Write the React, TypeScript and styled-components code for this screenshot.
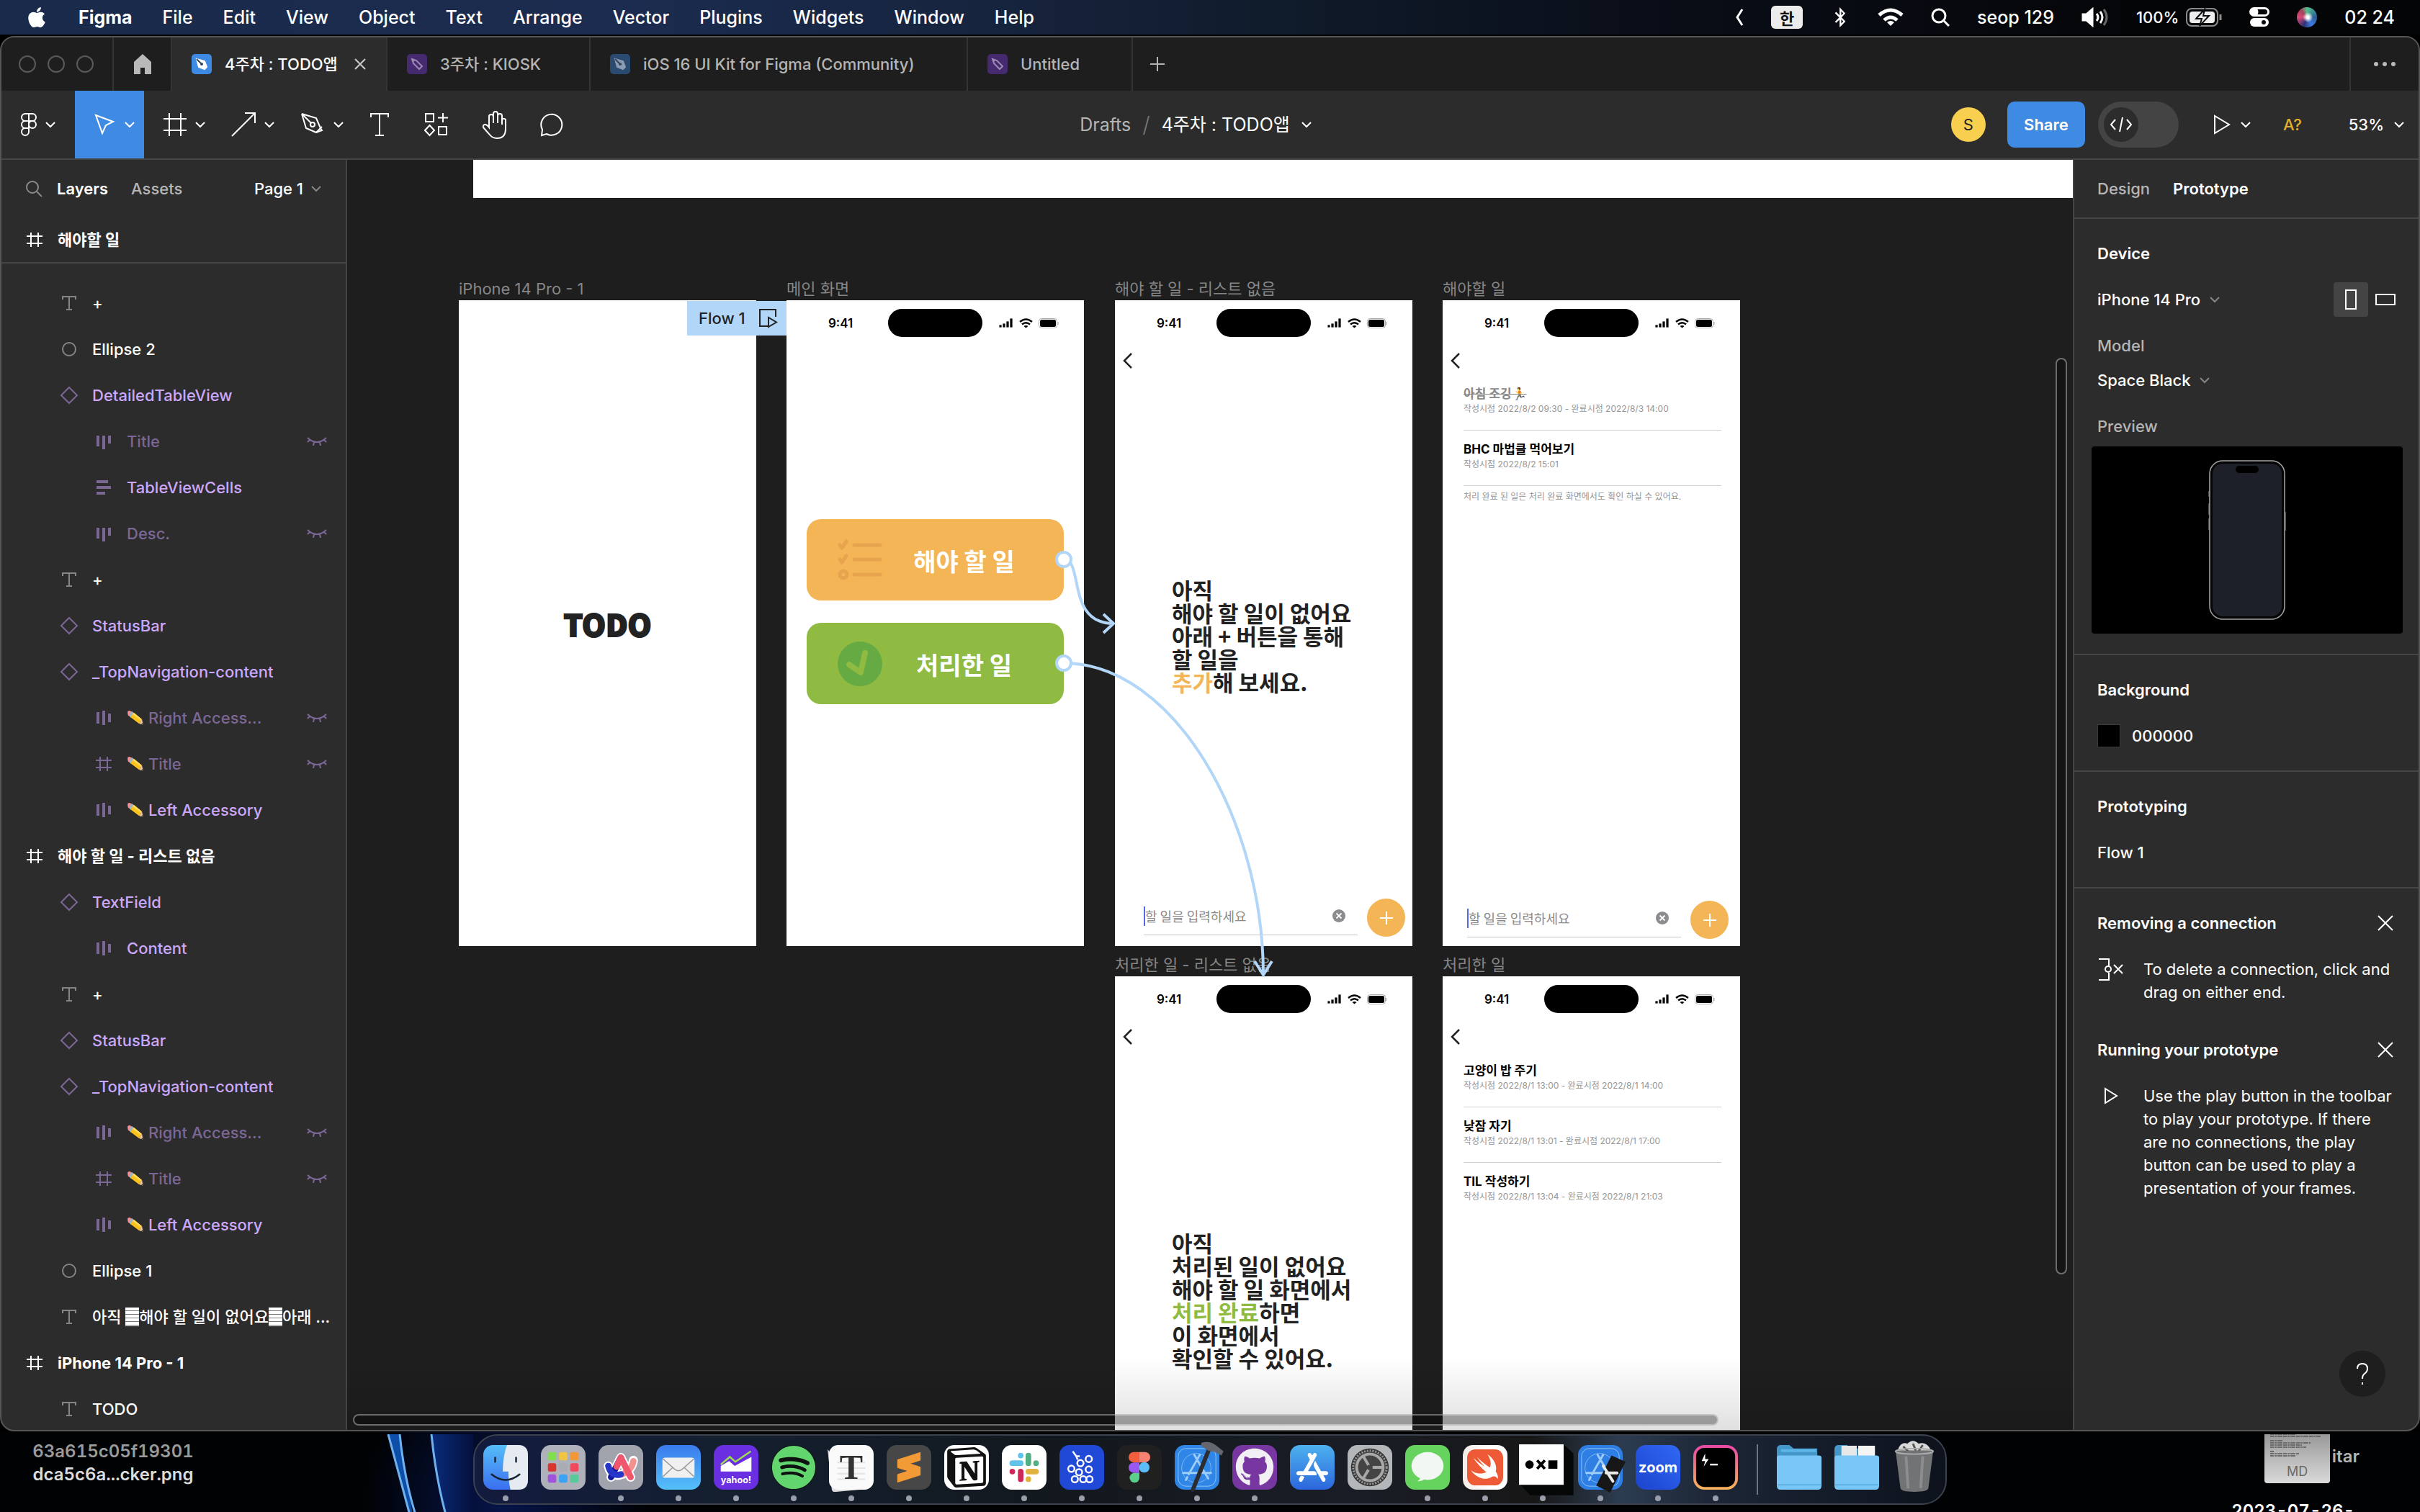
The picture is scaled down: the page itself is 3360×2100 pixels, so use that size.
import React from "react";
import styled, { createGlobalStyle, css } from "styled-components";
import { FaApple, FaBluetoothB, FaGithub, FaSpotify } from "react-icons/fa";
import { SiAppstore, SiNotion, SiSublimetext, SiSwift } from "react-icons/si";

const ui = `Inter, "Noto Sans CJK KR", sans-serif`;
const kr = `"Noto Sans CJK KR", "Noto Sans", sans-serif`;

const c = {
  panel: "#2c2c2c",
  bar: "#1e1e1e",
  line: "#444444",
  blue: "#3f8ae2",
  wire: "#b1d6f8",
  purple: "#cba8fb",
  purpleDim: "#7b6796",
  orange: "#f4b556",
  green: "#8fbb43",
  muted: "#b5b5b5",
};

const Global = createGlobalStyle`
  * { box-sizing: border-box; }
  body { margin: 0; background: #000; font-family: ${ui}; color: #fff; }
  button, input, select { font: inherit; color: inherit; background: none; border: 0; padding: 0; margin: 0; appearance: none; outline: 0; }
  ul, h2, h3, p { margin: 0; padding: 0; list-style: none; font-size: inherit; }
  svg { display: block; flex: none; }
`;

const Desktop = styled.div`
  height: 100vh;
  overflow: hidden;
  display: grid;
  grid-template-rows: 50px minmax(0, 1fr) 112px;
  background: #000;
`;

/* ---------- menu bar ---------- */

const MenuBar = styled.header`
  display: flex;
  justify-content: space-between;
  align-items: center;
  height: 48px;
  padding: 0 35px;
  background: linear-gradient(90deg, #1a2a4a 0%, #1b2c50 26%, #16233c 42%, #101c2c 52%, #0a0e18 68%, #040507 90%);
  font-size: 25px;
  font-weight: 500;
  line-height: 32px;
`;

const Menus = styled.nav`
  display: flex;
  align-items: center;
  gap: 42px;
`;

const MenuItem = styled.button<{ $strong?: boolean }>`
  font-weight: ${(p) => (p.$strong ? 700 : 500)};
`;

const StatusItems = styled.div<{ $gap: number; $size?: number }>`
  display: flex;
  align-items: center;
  gap: ${(p) => p.$gap}px;
  white-space: nowrap;
  font-size: ${(p) => p.$size ?? 25}px;
`;

const InputBadge = styled.span`
  display: grid;
  place-items: center;
  width: 44px;
  height: 32px;
  border-radius: 6px;
  background: #ececec;
  color: #10131a;
  font: 700 22px/32px ${kr};
`;

const Siri = styled.span`
  width: 28px;
  height: 28px;
  border-radius: 50%;
  background: radial-gradient(circle at 55% 50%, #fff 0 8%, transparent 34%),
    conic-gradient(#53c08c, #2d5f98 90deg, #3c7be0 150deg, #303070 200deg, #d84a78 270deg, #a9405c 320deg, #53c08c);
`;

/* ---------- window ---------- */

const Window = styled.main`
  display: grid;
  grid-template-rows: 74px 96px minmax(0, 1fr);
  border: 2px solid #565656;
  border-radius: 20px;
  overflow: hidden;
  background: ${c.panel};
  font-size: 22px;
  line-height: 32px;
`;

const TabBar = styled.div`
  display: flex;
  background: ${c.bar};
  color: ${c.muted};
`;

const Lights = styled.div`
  display: flex;
  align-items: center;
  gap: 16px;
  width: 156px;
  padding-left: 24px;
  border-right: 2px solid #333;
`;

const Light = styled.span`
  width: 24px;
  height: 24px;
  border: 2px solid #5a5a5a;
  border-radius: 50%;
`;

const HomeTab = styled.button`
  display: grid;
  place-items: center;
  width: 81px;
  border-right: 2px solid #333;
`;

const FileTab = styled.button<{ $w: number; $on?: boolean }>`
  display: flex;
  align-items: center;
  gap: 18px;
  flex: 0 1 ${(p) => p.$w}px;
  padding: 0 28px 0 27px;
  border-right: 2px solid #333;
  white-space: nowrap;
  font-weight: 500;
  ${(p) =>
    p.$on &&
    css`
      background: ${c.panel};
      color: #fff;
    `}
`;

const TabBadge = styled.span<{ $tone: string; $ink: string }>`
  display: grid;
  place-items: center;
  width: 28px;
  height: 28px;
  border-radius: 5px;
  background: ${(p) => p.$tone};
  color: ${(p) => p.$ink};
`;

const TabClose = styled.span`
  margin-left: auto;
  color: #ccc;
`;

const BarButton = styled.button`
  display: grid;
  place-items: center;
  width: 68px;
`;

const MoreButton = styled(BarButton)`
  width: 96px;
  margin-left: auto;
  border-left: 2px solid #333;
`;

const Toolbar = styled.div`
  display: grid;
  grid-template-columns: 1fr auto 1fr;
  align-items: stretch;
  border-bottom: 2px solid ${c.line};
`;

const Tools = styled.div`
  display: flex;
`;

const Tool = styled.button<{ $w: number; $on?: boolean; $pad?: number }>`
  display: flex;
  align-items: center;
  justify-content: ${(p) => (p.$w > 80 ? "flex-start" : "center")};
  gap: 11px;
  padding-left: ${(p) => p.$pad ?? 0}px;
  width: ${(p) => p.$w}px;
  background: ${(p) => (p.$on ? c.blue : "none")};
`;

const Crumbs = styled.div`
  display: flex;
  align-items: center;
  gap: 16px;
  font-size: 25px;
  padding-right: 40px;
`;

const CrumbLink = styled.a`
  color: ${c.muted};
  text-decoration: none;
`;

const Slash = styled.span`
  color: #777;
  font-size: 30px;
  font-weight: 300;
`;

const Actions = styled.div`
  display: flex;
  align-items: center;
  justify-content: flex-end;
  padding-right: 20px;
`;

const Avatar = styled.span`
  display: grid;
  place-items: center;
  width: 48px;
  height: 48px;
  margin-right: 30px;
  border-radius: 50%;
  background: #f8cf4f;
  color: #222;
`;

const ShareButton = styled.button`
  width: 108px;
  height: 64px;
  margin-right: 18px;
  border-radius: 10px;
  background: ${c.blue};
  font-weight: 600;
`;

const DevSwitch = styled.label`
  display: flex;
  align-items: center;
  width: 112px;
  height: 64px;
  padding-left: 8px;
  border-radius: 32px;
  background: #444;
`;

const DevKnob = styled.span`
  display: grid;
  place-items: center;
  width: 48px;
  height: 48px;
  border-radius: 50%;
  background: ${c.panel};
`;

const HiddenInput = styled.input`
  position: absolute;
  opacity: 0;
  width: 1px;
  height: 1px;
`;

const ActionButton = styled.button<{ $ml: number; $tone?: string }>`
  display: flex;
  align-items: center;
  gap: 14px;
  margin-left: ${(p) => p.$ml}px;
  color: ${(p) => p.$tone ?? "#fff"};
  font-weight: 500;
`;

const Body = styled.div`
  display: grid;
  grid-template-columns: 480px minmax(0, 1fr) 480px;
  min-height: 0;
`;

/* ---------- layers ---------- */

const LayersPanel = styled.aside`
  display: flex;
  flex-direction: column;
  border-right: 2px solid ${c.line};
  overflow: hidden;
`;

const PanelHead = styled.div`
  flex: none;
  display: flex;
  align-items: center;
  height: 80px;
  padding: 0 34px 0 33px;
`;

const PanelTab = styled.button<{ $on?: boolean; $ml?: number }>`
  margin-left: ${(p) => p.$ml ?? 0}px;
  color: ${(p) => (p.$on ? "#fff" : c.muted)};
  font-weight: ${(p) => (p.$on ? 600 : 500)};
`;

const PageButton = styled.button`
  display: flex;
  align-items: center;
  gap: 11px;
  margin-left: auto;
  font-weight: 500;
`;

const PinnedFrame = styled.div`
  flex: none;
  display: flex;
  align-items: center;
  height: 64px;
  border-bottom: 2px solid ${c.line};
`;

const LayerList = styled.ul`
  padding-top: 23px;
`;

type Tone = "frame" | "plain" | "comp" | "hidden";
const ink: Record<Tone, string> = { frame: "#fff", plain: "#fff", comp: c.purple, hidden: c.purpleDim };
const iconInk: Record<Tone, string> = { frame: "#fff", plain: "#858585", comp: c.purpleDim, hidden: c.purpleDim };

const LayerRow = styled.li<{ $level: number; $tone: Tone }>`
  display: flex;
  align-items: center;
  gap: 18px;
  height: 64px;
  padding-left: ${(p) => 32 + p.$level * 48}px;
  padding-right: 26px;
  color: ${(p) => ink[p.$tone]};
  font-weight: ${(p) => (p.$tone === "frame" ? 700 : 500)};
  white-space: nowrap;
  > svg { color: ${(p) => iconInk[p.$tone]}; }
`;

const LayerName = styled.span`
  flex: 1;
  min-width: 0;
  display: flex;
  align-items: center;
`;

const LineMark = styled.span`
  flex: none;
  width: 19px;
  height: 26px;
  background: repeating-linear-gradient(#fff 0 4px, #777 4px 5px);
`;

/* ---------- canvas ---------- */

const Canvas = styled.section`
  position: relative;
  overflow: hidden;
  background: ${c.bar};
`;

const Band = styled.div`
  position: absolute;
  left: 175px;
  right: 0;
  top: 0;
  height: 53px;
  background: #fff;
`;

const Artboard = styled.div<{ $x: number; $y: number }>`
  position: absolute;
  left: ${(p) => p.$x}px;
  top: ${(p) => p.$y}px;
  width: 413px;
`;

const ArtboardName = styled.div`
  color: #868686;
  font-size: 22px;
  line-height: 32px;
`;

const Screen = styled.div`
  display: flex;
  flex-direction: column;
  height: 897px;
  background: #fff;
  color: #222;
`;

const Splash = styled.div`
  margin: auto;
  font: 900 42px/60px ${kr};
  -webkit-text-stroke: 2px #222;
`;

const PhoneStatus = styled.div`
  display: grid;
  grid-template-columns: 1fr 131px 1fr;
  align-items: center;
  padding-top: 12px;
  color: #000;
  font-size: 17px;
  font-weight: 600;
  line-height: 20px;
`;

const Clock = styled.span`
  padding-left: 58px;
`;

const Island = styled.span`
  height: 39px;
  border-radius: 20px;
  background: #000;
`;

const Signals = styled.span`
  display: flex;
  align-items: center;
  gap: 8px;
  padding-left: 23px;
`;

const BackButton = styled.button`
  display: flex;
  align-items: center;
  height: 40px;
  margin-top: 13px;
  padding-left: 10px;
  color: #222;
`;

const Cards = styled.div`
  display: grid;
  gap: 31px;
  padding: 253px 28px 0;
`;

const Card = styled.button<{ $bg: string }>`
  display: grid;
  grid-template-columns: 62px 1fr;
  align-items: center;
  height: 113px;
  padding-left: 43px;
  padding-right: 25px;
  border-radius: 20px;
  background: ${(p) => p.$bg};
  color: #fff;
  font: 700 34px/48px ${kr};
  text-align: center;
`;

const CardLabel = styled.span`
  padding-top: 3px;
`;

const Message = styled.p<{ $top: number }>`
  padding: ${(p) => p.$top}px 0 0 79px;
  font: 700 31px/32px ${kr};
  white-space: nowrap;
`;

const Mark = styled.span<{ $tone: string }>`
  color: ${(p) => p.$tone};
`;

const Composer = styled.div<{ $l: number; $r: number; $b: number }>`
  display: flex;
  align-items: center;
  gap: 13px;
  margin-top: auto;
  padding: 0 ${(p) => p.$r}px ${(p) => p.$b}px ${(p) => p.$l}px;
`;

const Field = styled.label`
  flex: 1;
  display: flex;
  align-items: center;
  height: 48px;
  padding: 0 17px 4px 0;
  border-bottom: 1px solid #c8c8c8;
`;

const Caret = styled.span`
  width: 2px;
  height: 27px;
  background: #5468e8;
`;

const FieldInput = styled.input`
  flex: 1;
  min-width: 0;
  font: 400 18px/26px ${kr};
  &::placeholder { color: #8a8a8a; opacity: 1; }
`;

const AddButton = styled.button`
  display: grid;
  place-items: center;
  width: 53px;
  height: 53px;
  border-radius: 50%;
  background: ${c.orange};
  color: #fff;
`;

const TodoList = styled.ul<{ $top?: number }>`
  padding: ${(p) => p.$top ?? 0}px 26px 0 29px;
`;

const Todo = styled.li<{ $last?: boolean }>`
  height: 77px;
  padding-top: 15px;
  border-bottom: ${(p) => (p.$last ? "0" : "1px")} solid #cfcfcf;
`;

const TodoTitle = styled.div<{ $done?: boolean }>`
  font: 700 17px/22px Inter, ${kr};
  color: ${(p) => (p.$done ? "#888" : "#000")};
  text-decoration: ${(p) => (p.$done ? "line-through" : "none")};
`;

const Stamp = styled.div`
  font: 400 12px/20px Inter, ${kr};
  color: #959595;
  white-space: nowrap;
`;

const Note = styled(Stamp)`
  padding: 5px 0 0 29px;
`;

const FlowTag = styled.button`
  position: absolute;
  left: 472px;
  top: 196px;
  display: flex;
  align-items: center;
  gap: 18px;
  height: 48px;
  width: 138px;
  padding-left: 16px;
  background: ${c.wire};
  color: #222;
  font-size: 22px;
  font-weight: 500;
`;

const Wires = styled.svg`
  position: absolute;
  left: 0;
  top: 0;
`;

const Shade = styled.div`
  position: absolute;
  inset: auto 0 0 0;
  height: 100px;
  background: linear-gradient(transparent, rgba(0, 0, 0, 0.12));
`;

const Thumb = styled.div<{ $vertical?: boolean }>`
  position: absolute;
  border: 2px solid rgba(255, 255, 255, 0.38);
  border-radius: 8px;
  background: rgba(0, 0, 0, 0.32);
  ${(p) =>
    p.$vertical
      ? css`right: 8px; top: 275px; bottom: 216px; width: 16px;`
      : css`left: 8px; right: 492px; bottom: 6px; height: 16px;`}
`;

/* ---------- prototype panel ---------- */

const ProtoPanel = styled.aside`
  position: relative;
  border-left: 2px solid ${c.line};
  overflow: hidden;
`;

const ProtoTabs = styled.div`
  display: flex;
  height: 82px;
  padding: 0 32px;
  border-bottom: 2px solid ${c.line};
`;

const Section = styled.section<{ $open?: boolean }>`
  padding: 16px 32px;
  border-bottom: ${(p) => (p.$open ? 0 : 2)}px solid ${c.line};
`;

const Row = styled.div<{ $h?: number }>`
  display: flex;
  align-items: center;
  height: ${(p) => p.$h ?? 64}px;
  font-weight: 500;
`;

const Heading = styled.h2`
  font-weight: 600;
`;

const Caption = styled.label`
  color: ${c.muted};
`;

const Picker = styled.select`
  font-weight: 500;
  margin-right: 12px;
`;

const Orientation = styled.div`
  display: flex;
  margin: 0 -10px 0 auto;
`;

const Orient = styled.label<{ $on?: boolean }>`
  display: grid;
  place-items: center;
  width: 48px;
  height: 48px;
  border-radius: 4px;
  background: ${(p) => (p.$on ? "#444" : "none")};
`;

const Glyph = styled.span<{ $w: number; $h: number }>`
  width: ${(p) => p.$w}px;
  height: ${(p) => p.$h}px;
  border: 2px solid #fff;
`;

const Preview = styled.div`
  display: grid;
  place-items: center;
  height: 260px;
  margin: -20px -10px 12px -8px;
  border-radius: 4px;
  background: #000;
`;

const Swatch = styled.span`
  width: 32px;
  height: 32px;
  margin-right: 16px;
  border: 1px solid #3a3a3a;
  background: #000;
`;

const CloseButton = styled.button`
  margin: 0 3px 0 auto;
`;

const Tip = styled.div`
  display: grid;
  grid-template-columns: 64px 1fr;
  padding: 16px 0 32px;
  margin-right: -20px;
`;

const TipText = styled.p`
  max-width: 352px;
`;

const HelpButton = styled.button`
  position: absolute;
  right: 46px;
  bottom: 46px;
  display: grid;
  place-items: center;
  width: 64px;
  height: 64px;
  border-radius: 50%;
  background: #1e1e1e;
`;

/* ---------- dock ---------- */

const Shelf = styled.footer`
  display: grid;
  grid-template-columns: 1fr auto 1fr;
  padding-top: 4px;
  background: radial-gradient(ellipse 200px 200px at 700px 100px, #06154a, transparent), #010204;
`;

const FileLabel = styled.div`
  justify-self: start;
  width: 314px;
  padding-top: 8px;
  text-align: center;
  font-size: 24px;
  font-weight: 600;
  font-variant-numeric: tabular-nums;
  line-height: 32px;
  color: #dcdcdc;
`;

const Dim = styled.span`
  color: #9a9a9a;
`;

const LeftDesk = styled.div`
  display: flex;
  justify-content: space-between;
  overflow: hidden;
`;

const DockBar = styled.ul`
  display: flex;
  height: 98px;
  padding: 0 3px;
  border: 2px solid #3c424d;
  border-radius: 34px;
  background: linear-gradient(90deg, #131b3e 0%, #141f30 16%, #12181d 40%, #1a1d26 60%, #171717 72%, #2c3c50 78%, #1c2636 84%, #0d121c 100%);
`;

const DockItem = styled.li<{ $run?: boolean }>`
  display: flex;
  flex-direction: column;
  align-items: center;
  gap: 8px;
  width: 80px;
  padding-top: 13px;
  &::after {
    content: "";
    width: 8px;
    height: 8px;
    border-radius: 50%;
    background: ${(p) => (p.$run ? "#9a9eab" : "transparent")};
  }
`;

const DockRule = styled.li`
  width: 2px;
  margin: 12px 17px;
  background: #6a7684;
`;

const Tile = styled.span<{ $bg: string; $ink?: string; $size?: number; $round?: number }>`
  display: grid;
  place-items: center;
  width: 62px;
  height: 62px;
  border-radius: ${(p) => p.$round ?? 14}px;
  background: ${(p) => p.$bg};
  color: ${(p) => p.$ink ?? "#fff"};
  font-size: ${(p) => p.$size ?? 20}px;
  line-height: 1;
  overflow: hidden;
`;

const RightDesk = styled.div`
  position: relative;
  overflow: hidden;
  color: #fff;
  font-size: 24px;
  font-weight: 600;
  font-variant-numeric: tabular-nums;
  line-height: 32px;
`;

const FileCard = styled.div`
  position: absolute;
  right: 125px;
  top: -3px;
  display: grid;
  justify-items: center;
  align-content: space-between;
  width: 91px;
  height: 71px;
  padding-bottom: 4px;
  border-radius: 0 0 4px 4px;
  background: linear-gradient(#969696, #dadada);
  color: #6a6a6a;
  font-size: 18px;
  font-weight: 400;
  line-height: 24px;
`;

const FileEnd = styled(Dim)`
  position: absolute;
  right: 84px;
  top: 15px;
  color: #b4b4b4;
`;

const FileDate = styled.span`
  position: absolute;
  right: 91px;
  top: 91px;
`;

/* ---------- icons ---------- */

type IconProps = { w?: number; h?: number; vb?: string; sw?: number; children: React.ReactNode };
const Icon = ({ w = 28, h, vb, sw = 2, children }: IconProps) => (
  <svg width={w} height={h ?? w} viewBox={vb ?? `0 0 ${w} ${h ?? w}`} fill="none" stroke="currentColor" strokeWidth={sw} aria-hidden>
    {children}
  </svg>
);

const Chevron = ({ tone = "currentColor" }: { tone?: string }) => (
  <svg width="14" height="10" viewBox="0 0 14 10" fill="none" stroke={tone} strokeWidth="2" aria-hidden>
    <path d="M1 2l6 6 6-6" />
  </svg>
);

const FrameIcon = () => <Icon><path d="M9 4v20M19 4v20M3 9h22M3 19h22" /></Icon>;
const TextIcon = () => <Icon><path d="M5 9V5h18v4M14 5v18M10 23h8" /></Icon>;
const EllipseIcon = () => <Icon><circle cx="14" cy="14" r="9" /></Icon>;
const DiamondIcon = () => <Icon><path d="M14 3l11 11-11 11L3 14z" /></Icon>;
const ColsIcon = () => <Icon><path d="M6 6v15M14 6v19M22 6v11" strokeWidth="4" /></Icon>;
const CenterColsIcon = () => <Icon><path d="M6 6v16M14 4v20M22 8v12" strokeWidth="4" /></Icon>;
const RowsIcon = () => <Icon><path d="M4 6h16M4 14h20M4 22h12" strokeWidth="4" /></Icon>;
const EyeIcon = () => <Icon h={14}><path d="M1 2q13 12 26 0M4 5L1 8M10 8l-1 5M18 8l1 5M24 5l3 3" /></Icon>;
const CloseIcon = ({ s = 22 }: { s?: number }) => <Icon w={s}><path d={`M1 1L${s - 1} ${s - 1}M${s - 1} 1L1 ${s - 1}`} /></Icon>;
const PenGlyph = () => <Icon w={20} h={20}><path d="M3 3l11 3 3 8-3 3-8-3z" fill="currentColor" /><path d="M3 3l6 6" stroke="#345" /><circle cx="10" cy="10" r="2" fill="#345" stroke="none" /></Icon>;
const MarkerGlyph = () => <Icon w={20} h={20}><path d="M3 3l6 2 8 8-4 4-8-8zM3 3l3 3" strokeWidth="2" /></Icon>;
const PlayIcon = ({ w = 24 }: { w?: number }) => <Icon w={w} h={28} vb="0 0 24 28"><path d="M2 2v24L22 14z" /></Icon>;

const Pencil = () => (
  <svg width="24" height="24" viewBox="0 0 24 24" aria-hidden>
    <path d="M1 5q0-3 3-3l4 2-3 6-3-1z" fill="#ee8f92" />
    <path d="M7 3l4 3-5 6-3-3z" fill="#9fb6c6" />
    <path d="M10 5l11 9-4 6L5 11z" fill="#fbc21b" />
    <path d="M10 5l11 9-1 2L8 7z" fill="#ffdb5a" />
    <path d="M21 14l2 8-6-2z" fill="#e8c39b" />
    <path d="M23 22l-3-1 2-2z" fill="#333" />
  </svg>
);

const PhoneStatusBar = () => (
  <PhoneStatus>
    <Clock>9:41</Clock>
    <Island />
    <Signals>
      <svg width="20" height="14" viewBox="0 0 20 14" aria-hidden><path d="M0 9h4v4H0zM5 7h4v6H5zM10 4h4v9h-4zM15 0h4v13h-4z" stroke="#fff" strokeWidth="0.8" /></svg>
      <svg width="19" height="14" viewBox="0 0 19 14" fill="none" stroke="#000" strokeWidth="2.4" aria-hidden><path d="M1 5q8.500-7 17 0M4 8.500q5.500-4.500 11 0" /><path d="M9.500 13.500L6.500 11q3-2 6 0z" fill="#000" stroke="none" /></svg>
      <svg width="28" height="14" viewBox="0 0 28 14" aria-hidden><rect x="0.500" y="0.500" width="25" height="13" rx="4" fill="none" stroke="#aaa" /><rect x="2" y="2" width="22" height="10" rx="2.500" /><path d="M27 5v4" stroke="#aaa" /></svg>
    </Signals>
  </PhoneStatus>
);

const Back = () => (
  <BackButton aria-label="Back">
    <Icon w={16} h={22} sw={2.5}><path d="M13 1L3 11l10 10" /></Icon>
  </BackButton>
);

const AddTodo = ({ l, r, b, id }: { l: number; r: number; b: number; id: string }) => (
  <Composer $l={l} $r={r} $b={b}>
    <Field htmlFor={id}>
      <Caret />
      <FieldInput id={id} placeholder="할 일을 입력하세요" />
      <svg width="18" height="18" viewBox="0 0 18 18" aria-hidden><circle cx="9" cy="9" r="9" fill="#8c8c90" /><path d="M5.500 5.500l7 7M12.500 5.500l-7 7" stroke="#fff" strokeWidth="1.800" /></svg>
    </Field>
    <AddButton aria-label="Add"><Icon w={18}><path d="M9 0v18M0 9h18" /></Icon></AddButton>
  </Composer>
);

/* ---------- data ---------- */

type Layer = { level: number; tone: Tone; icon: () => React.ReactElement; name: React.ReactNode; pencil?: boolean };
const nav: Layer[] = [
  { level: 1, tone: "plain", icon: TextIcon, name: "+" },
  { level: 1, tone: "comp", icon: DiamondIcon, name: "StatusBar" },
  { level: 1, tone: "comp", icon: DiamondIcon, name: "_TopNavigation-content" },
  { level: 2, tone: "hidden", icon: CenterColsIcon, name: "Right Access...", pencil: true },
  { level: 2, tone: "hidden", icon: FrameIcon, name: "Title", pencil: true },
  { level: 2, tone: "comp", icon: CenterColsIcon, name: "Left Accessory", pencil: true },
];
const layers: Layer[] = [
  { level: 1, tone: "plain", icon: TextIcon, name: "+" },
  { level: 1, tone: "plain", icon: EllipseIcon, name: "Ellipse 2" },
  { level: 1, tone: "comp", icon: DiamondIcon, name: "DetailedTableView" },
  { level: 2, tone: "hidden", icon: ColsIcon, name: "Title" },
  { level: 2, tone: "comp", icon: RowsIcon, name: "TableViewCells" },
  { level: 2, tone: "hidden", icon: ColsIcon, name: "Desc." },
  ...nav,
  { level: 0, tone: "frame", icon: FrameIcon, name: "해야 할 일 - 리스트 없음" },
  { level: 1, tone: "comp", icon: DiamondIcon, name: "TextField" },
  { level: 2, tone: "comp", icon: CenterColsIcon, name: "Content" },
  ...nav,
  { level: 1, tone: "plain", icon: EllipseIcon, name: "Ellipse 1" },
  { level: 1, tone: "plain", icon: TextIcon, name: <>아직&nbsp;<LineMark />해야 할 일이 없어요<LineMark />아래 ...</> },
  { level: 0, tone: "frame", icon: FrameIcon, name: "iPhone 14 Pro - 1" },
  { level: 1, tone: "plain", icon: TextIcon, name: "TODO" },
];

const LayerItem = ({ layer }: { layer: Layer }) => (
  <LayerRow $level={layer.level} $tone={layer.tone}>
    <layer.icon />
    <LayerName>{layer.pencil && <><Pencil />&nbsp;</>}{layer.name}</LayerName>
    {layer.tone === "hidden" && <EyeIcon />}
  </LayerRow>
);

const Art = ({ children, bg, round }: { children: React.ReactNode; bg?: string; round?: number }) => (
  <svg width="62" height="62" viewBox="0 0 64 64" overflow="visible" aria-hidden>
    {bg && <rect width="64" height="64" rx={round ?? 14} fill={bg} />}
    {children}
  </svg>
);

const AStick = ({ tone, w = 5 }: { tone: string; w?: number }) => (
  <path d="M36 14L20 42M28 14l20 34M12 40h40M18 46l-2 4" stroke={tone} strokeWidth={w} strokeLinecap="round" fill="none" />
);

const dock: { art: React.ReactElement; run?: boolean }[] = [
  { run: true, art: (
    <Art>
      <defs>
        <linearGradient id="finder" x2="0" y2="1"><stop stopColor="#56bdf8" /><stop offset="1" stopColor="#3a6ff0" /></linearGradient>
      </defs>
      <rect width="64" height="64" rx="14" fill="url(#finder)" />
      <path d="M34 0h16q14 0 14 14v36q0 14-14 14H39q-3-12-3-26h-8q0-22 6-38z" fill="#e6eaf1" />
      <path d="M17 18v6M47 18v6M12 42q20 16 40 0" stroke="#16222f" strokeWidth="2.500" fill="none" strokeLinecap="round" />
    </Art>) },
  { art: (
    <Art bg="#aeb0ba">
      {["#7fe04b", "#f2c443", "#f0983a", "#d8362c", "#a9adb3", "#ee4a5c", "#a052dd", "#39a4f4", "#57c99a"].map((f, i) => (
        <rect key={f} x={10 + (i % 3) * 16} y={10 + Math.floor(i / 3) * 16} width="12" height="12" rx="3" fill={f} />
      ))}
    </Art>) },
  { run: true, art: (
    <Art bg="#a2a4ad">
      <path d="M32 18L18 46M32 18l14 28M14 30q4 18 20 12Q48 36 50 22" stroke="#fff" strokeWidth="13" strokeLinecap="round" fill="none" />
      <path d="M50 23Q48 36 34 42" stroke="#f3918f" strokeWidth="9" strokeLinecap="round" fill="none" />
      <path d="M32 18L18 46" stroke="#151c9c" strokeWidth="9" strokeLinecap="round" />
      <path d="M14 30q4 16 18 12" stroke="#2536c9" strokeWidth="9" strokeLinecap="round" fill="none" />
      <path d="M32 18l14 28M32 18l-6 13" stroke="#f0566e" strokeWidth="9" strokeLinecap="round" />
    </Art>) },
  { run: true, art: (
    <Art>
      <defs>
        <linearGradient id="mail" x2="0" y2="1"><stop stopColor="#3a7bee" /><stop offset="1" stopColor="#55c0f8" /></linearGradient>
      </defs>
      <rect width="64" height="64" rx="14" fill="url(#mail)" />
      <rect x="9" y="18" width="46" height="29" rx="4" fill="#f0f0f0" />
      <path d="M10 20l17 15q5 4 10 0l17-15M10 45l14-13M54 45L40 32" stroke="#9a9a9a" strokeWidth="1.500" fill="none" />
    </Art>) },
  { run: true, art: (
    <Art bg="#6a2fe0">
      <path d="M10 38V30l12-7 8 7 24-13v21z" fill="#fff" />
      <path d="M10 28l13-11 8 7L53 9" stroke="#9de04a" strokeWidth="2.500" fill="none" />
      <text x="32" y="55" fontSize="13" fontWeight="700" fill="#fff" textAnchor="middle">yahoo!</text>
    </Art>) },
  { run: true, art: <Tile $bg="#0d1210" $ink="#62d56e" $size={62} $round={31}><FaSpotify /></Tile> },
  { run: true, art: (
    <Art>
      <path d="M-2 6l6 58q1 4 6 3l34-3z" fill="#dcdcdc" />
      <rect width="64" height="64" rx="13" fill="#fafafa" />
      <path d="M12 25h40M12 33h40M12 41h40M12 49h40" stroke="#e4e4e4" strokeWidth="2" />
      <text x="32" y="49" fontSize="50" fontWeight="700" fontFamily="Liberation Serif, serif" fill="#333" textAnchor="middle">T</text>
    </Art>) },
  { run: true, art: <Tile $bg="#474747" $ink="#f29a35" $size={42}><SiSublimetext /></Tile> },
  { run: true, art: <Tile $bg="#fff" $ink="#111" $size={56}><SiNotion /></Tile> },
  { run: true, art: (
    <Art bg="#fff">
      <g strokeWidth="8" strokeLinecap="round">
        <path d="M27 15v0M27 26H15" stroke="#61c3ea" />
        <path d="M38 15v11M49 26v0" stroke="#4fb183" />
        <path d="M38 38h11M38 49v0" stroke="#e2b23f" />
        <path d="M27 38v11M15 38v0" stroke="#cf2858" />
      </g>
    </Art>) },
  { run: true, art: (
    <Art bg="#2049d8">
      <g fill="none" stroke="#fff" strokeWidth="2.500">
        <path d="M19 9l5 7h5M24 16l2 5" />
        {[[30, 26], [42, 20], [17, 34], [28, 39], [42, 35], [22, 49], [34, 49], [43, 49]].map(([x, y]) => <circle key={`${x}-${y}`} cx={x} cy={y} r="4.500" />)}
      </g>
    </Art>) },
  { run: true, art: (
    <Art bg="#202020">
      <path d="M32 10h-8a7 7 0 000 15h8z" fill="#f0603c" /><path d="M32 10h8a7 7 0 010 15h-8z" fill="#f58273" />
      <path d="M32 25h-8a7 7 0 000 15h8z" fill="#9b57f2" /><circle cx="39" cy="32" r="7.500" fill="#5cbdf8" />
      <path d="M32 40h-8a7 7 0 108 7z" fill="#5ad08a" />
    </Art>) },
  { run: true, art: (
    <Art bg="#2f86e6">
      <rect x="5" y="5" width="54" height="54" rx="11" fill="none" stroke="#8cc6f7" />
      <circle cx="31" cy="33" r="21" fill="none" stroke="#7db8f2" />
      <AStick tone="#9ccdf8" w={3} />
      <path d="M50 4L26 64" stroke="#2b2d31" strokeWidth="6" strokeLinecap="round" />
      <path d="M38-3q12-4 22 4l10 8-3 6-9-5-10-2-10-7z" fill="#63666c" />
    </Art>) },
  { run: true, art: <Tile $bg="#7736a0" $ink="#f1eef4" $size={54}><FaGithub /></Tile> },
  { art: <Tile $bg="linear-gradient(#4db2ee, #2c66dc)" $ink="#fff" $size={44}><SiAppstore /></Tile> },
  { art: (
    <Art bg="#b4b7ba">
      <circle cx="32" cy="32" r="27" fill="#333" />
      <circle cx="32" cy="32" r="24" fill="#444" stroke="#999" strokeWidth="3" strokeDasharray="2 2" />
      <circle cx="32" cy="32" r="19" fill="#444" stroke="#a8a8a8" strokeWidth="4" />
      <path d="M32 32h18M32 32l-9-15M32 32l-9 15" stroke="#a8a8a8" strokeWidth="4" />
      <circle cx="32" cy="32" r="4" fill="#444" />
    </Art>) },
  { run: true, art: (
    <Art bg="#66d35f">
      <ellipse cx="32" cy="30" rx="23" ry="20" fill="#f3f7f3" />
      <path d="M22 44q0 6-5 8 9 0 12-5z" fill="#f3f7f3" />
    </Art>) },
  { run: true, art: <Tile $bg="linear-gradient(90deg, #f6ece6, #fff 60%)" $ink="#ee5936" $size={50}><SiSwift /></Tile> },
  { run: true, art: (
    <Art>
      <path d="M0 57l14 15h62V12L62-1z" fill="#060808" />
      <rect x="-2" y="-1" width="64" height="58" fill="#fff" />
      <circle cx="13" cy="28" r="6" fill="#000" />
      <path d="M24 22l11 12M35 22L24 34" stroke="#000" strokeWidth="4" />
      <rect x="40" y="22" width="13" height="12" fill="#000" />
    </Art>) },
  { run: true, art: (
    <Art bg="#2f7ee4">
      <rect x="5" y="5" width="54" height="54" rx="11" fill="none" stroke="#8cc6f7" />
      <circle cx="31" cy="33" r="21" fill="none" stroke="#7db8f2" />
      <AStick tone="#9ccdf8" w={3} />
      <path d="M48 15l20 9-22 44-20-10z" fill="#171717" />
      <path d="M36 30l14 22M40 40h16" stroke="#e8e8e8" strokeWidth="4" strokeLinecap="round" />
    </Art>) },
  { run: true, art: <Tile $bg="linear-gradient(45deg, #1c44cc, #2f68f5)"><b>zoom</b></Tile> },
  { run: true, art: (
    <Art>
      <defs><linearGradient id="warp" x2="0" y2="1"><stop stopColor="#e84aa5" /><stop offset="1" stopColor="#f6b25c" /></linearGradient></defs>
      <rect x="2" y="2" width="60" height="60" rx="14" fill="#000" stroke="url(#warp)" strokeWidth="4" />
      <path d="M17 12l-5 11h5l-2 8 7-11h-5z" fill="#fff" /><path d="M24 28h11" stroke="#fff" strokeWidth="2.500" />
    </Art>) },
];

const Folder = ({ children }: { children?: React.ReactNode }) => (
  <Art>
    <path d="M0 6q0-6 6-6h12l6 5h34v18H0z" fill="#4497c9" />
    {children}
    <path d="M0 18q0-3 4-3h56q4 0 4 3v40q0 6-5 6H5q-5 0-5-6z" fill="#78c7f7" />
    <path d="M1 57h62" stroke="#5eb0e4" strokeWidth="2" />
  </Art>
);

export default function App() {
  return (
    <Desktop>
      <Global />
      <MenuBar>
        <Menus>
          <FaApple size={32} />
          <MenuItem $strong>Figma</MenuItem>
          {["File", "Edit", "View", "Object", "Text", "Arrange", "Vector", "Plugins", "Widgets", "Window", "Help"].map((m) => (
            <MenuItem key={m}>{m}</MenuItem>
          ))}
        </Menus>
        <StatusItems $gap={38}>
          <Icon w={12} h={24} sw={3}><path d="M10 1L3 12l7 11" /></Icon>
          <InputBadge>한</InputBadge>
          <FaBluetoothB size={28} />
          <Icon w={36} h={26} sw={5}><path d="M2 10q16-14 32 0M9 17q9-8 18 0" /><path d="M18 25l-5-5q5-4 10 0z" fill="currentColor" stroke="none" /></Icon>
          <Icon w={26} sw={3}><circle cx="11" cy="11" r="9" /><path d="M17 17l8 8" /></Icon>
          <span>seop 129</span>
          <Icon w={38} h={28} sw={3}><path d="M2 10h5l8-7v22l-8-7H2z" fill="currentColor" /><path d="M21 9q4 5 0 10M26 6q6 8 0 16" /><path d="M31 3q8 11 0 22" stroke="#666" /></Icon>
          <StatusItems $gap={10} $size={22}>
            <span>100%</span>
            <Icon w={50} h={26}><rect x="1" y="1" width="43" height="24" rx="7" stroke="#8a8a8a" /><rect x="5" y="5" width="35" height="16" rx="4" fill="#eee" stroke="none" /><path d="M48 9v8" stroke="#8a8a8a" strokeWidth="3" /><path d="M26 2L14 15h8l-3 10 13-14h-8z" fill="#eee" stroke="#0a0c10" /></Icon>
          </StatusItems>
          <Icon w={28} h={28} sw={3}><rect x="1.500" y="1.500" width="25" height="10" rx="5" /><circle cx="7" cy="6.500" r="4" fill="currentColor" /><rect x="1" y="15" width="26" height="12" rx="6" fill="currentColor" stroke="none" /><circle cx="20" cy="21" r="3" fill="#0a0c10" stroke="none" /></Icon>
          <Siri />
          <span>02 24</span>
        </StatusItems>
      </MenuBar>

      <Window>
        <TabBar>
          <Lights><Light /><Light /><Light /></Lights>
          <HomeTab aria-label="Home">
            <svg width="28" height="28" viewBox="0 0 28 28" fill="#b9b9b9" aria-hidden><path d="M14 0l12 11v17h-9v-9h-6v9H2V11z" /></svg>
          </HomeTab>
          <FileTab $w={299} $on>
            <TabBadge $tone={c.blue} $ink="#fff"><PenGlyph /></TabBadge>4주차 : TODO앱<TabClose><CloseIcon s={16} /></TabClose>
          </FileTab>
          <FileTab $w={282}><TabBadge $tone="#452a70" $ink="#9b8ab2"><MarkerGlyph /></TabBadge>3주차 : KIOSK</FileTab>
          <FileTab $w={524}><TabBadge $tone="#2a4a70" $ink="#8a9db4"><PenGlyph /></TabBadge>iOS 16 UI Kit for Figma (Community)</FileTab>
          <FileTab $w={229}><TabBadge $tone="#452a70" $ink="#9b8ab2"><MarkerGlyph /></TabBadge>Untitled</FileTab>
          <BarButton aria-label="New tab"><Icon w={20}><path d="M10 0v20M0 10h20" /></Icon></BarButton>
          <MoreButton aria-label="More">
            <svg width="32" height="8" viewBox="0 0 32 8" fill="#b9b9b9" aria-hidden><circle cx="4" cy="4" r="3" /><circle cx="16" cy="4" r="3" /><circle cx="28" cy="4" r="3" /></svg>
          </MoreButton>
        </TabBar>

        <Toolbar>
          <Tools>
            <Tool $w={102} $pad={26} aria-label="Main menu">
              <Icon w={24} h={34}><path d="M12 2H7a5 5 0 000 10h5zM12 2h5a5 5 0 010 10h-5M12 12H7a5 5 0 000 10h5z" /><circle cx="17" cy="17" r="5" /><path d="M12 22H7a5 5 0 105 5z" /></Icon>
              <Chevron />
            </Tool>
            <Tool $w={96} $pad={26} $on aria-label="Move"><Icon w={32}><path d="M3 3l24 9-10 5-5 11z" /></Icon><Chevron /></Tool>
            <Tool $w={96} $pad={26} aria-label="Frame"><Icon w={34}><path d="M9 1v32M25 1v32M1 9h32M1 25h32" /></Icon><Chevron /></Tool>
            <Tool $w={96} $pad={24} aria-label="Line"><Icon w={36}><path d="M2 34L34 2M20 2h14v14" /></Icon><Chevron /></Tool>
            <Tool $w={96} $pad={24} aria-label="Pen"><Icon w={36}><path d="M3 3l20 6 6 14M3 3l6 20 14 6M23 29l8-3-2-3M3 3l13 13" /><circle cx="18" cy="18" r="3" /><path d="M23 29l8-8" /></Icon><Chevron /></Tool>
            <Tool $w={78} aria-label="Text"><Icon w={28} h={34}><path d="M2 7V2h24v5M14 2v30M8 32h12" /></Icon></Tool>
            <Tool $w={80} aria-label="Resources"><Icon w={34}><path d="M2 2h11v11H2zM26 1v13M19 7.500h14M7.500 18l6.500 7-6.500 7L1 25zM20 20h11v11H20z" /></Icon></Tool>
            <Tool $w={80} aria-label="Hand"><Icon w={36} h={40}><path d="M11 22V9a3 3 0 016 0v9V5a3 3 0 016 0v13-10a3 3 0 016 0v12-7a3 3 0 015 0v13q0 13-12 13-7 0-11-6L3 24q-1-4 3-4 2 0 5 4z" /></Icon></Tool>
            <Tool $w={80} aria-label="Comment"><Icon w={36}><path d="M4 33l1-8a14.500 14.500 0 116 6z" /></Icon></Tool>
          </Tools>
          <Crumbs>
            <CrumbLink href="#drafts">Drafts</CrumbLink>
            <Slash>/</Slash>
            <span>4주차 : TODO앱</span>
            <Chevron />
          </Crumbs>
          <Actions>
            <Avatar>S</Avatar>
            <ShareButton>Share</ShareButton>
            <DevSwitch>
              <HiddenInput type="checkbox" role="switch" aria-label="Dev mode" />
              <DevKnob><Icon w={32} h={22}><path d="M8 4L2 11l6 7M24 4l6 7-6 7M18 1l-4 20" /></Icon></DevKnob>
            </DevSwitch>
            <ActionButton $ml={48} aria-label="Present"><PlayIcon /><Chevron /></ActionButton>
            <ActionButton $ml={45} $tone="#e0b02e">A?</ActionButton>
            <ActionButton $ml={65}>53%<Chevron /></ActionButton>
          </Actions>
        </Toolbar>

        <Body>
          <LayersPanel>
            <PanelHead>
              <Icon w={24}><circle cx="10" cy="10" r="8" stroke="#8a8a8a" /><path d="M16 16l7 7" stroke="#8a8a8a" /></Icon>
              <PanelTab $on $ml={20}>Layers</PanelTab>
              <PanelTab $ml={32}>Assets</PanelTab>
              <PageButton>Page 1 <Chevron tone="#858585" /></PageButton>
            </PanelHead>
            <PinnedFrame>
              <LayerRow as="div" $level={0} $tone="frame"><FrameIcon /><LayerName>해야할 일</LayerName></LayerRow>
            </PinnedFrame>
            <LayerList>
              {layers.map((l, i) => <LayerItem key={i} layer={l} />)}
            </LayerList>
          </LayersPanel>

          <Canvas>
            <Band />
            <Artboard $x={155} $y={163}>
              <ArtboardName>iPhone 14 Pro - 1</ArtboardName>
              <Screen><Splash>TODO</Splash></Screen>
            </Artboard>
            <Artboard $x={610} $y={163}>
              <ArtboardName>메인 화면</ArtboardName>
              <Screen>
                <PhoneStatusBar />
                <Cards>
                  <Card $bg={c.orange}>
                    <svg width="62" height="58" viewBox="0 0 62 58" fill="none" stroke="#e7a34e" strokeWidth="5" strokeLinecap="round" strokeLinejoin="round" aria-hidden>
                      <path d="M3 8l3 4 6-9M3 28l3 4 6-9M23 8h36M23 28h36M23 49h36" /><circle cx="8" cy="49" r="5" />
                    </svg>
                    <CardLabel>해야 할 일</CardLabel>
                  </Card>
                  <Card $bg={c.green}>
                    <svg width="62" height="62" viewBox="0 0 62 62" aria-hidden>
                      <circle cx="31" cy="31" r="31" fill="#66aa43" />
                      <path d="M16 32l16 11 6-27" fill="none" stroke={c.green} strokeWidth="8" strokeLinecap="round" strokeLinejoin="round" />
                    </svg>
                    <CardLabel>처리한 일</CardLabel>
                  </Card>
                </Cards>
              </Screen>
            </Artboard>
            <Artboard $x={1066} $y={163}>
              <ArtboardName>해야 할 일 - 리스트 없음</ArtboardName>
              <Screen>
                <PhoneStatusBar />
                <Back />
                <Message $top={282}>아직<br />해야 할 일이 없어요<br />아래 + 버튼을 통해<br />할 일을<br /><Mark $tone={c.orange}>추가</Mark>해 보세요.</Message>
                <AddTodo id="new-empty" l={40} r={10} b={13} />
              </Screen>
            </Artboard>
            <Artboard $x={1521} $y={163}>
              <ArtboardName>해야할 일</ArtboardName>
              <Screen>
                <PhoneStatusBar />
                <Back />
                <TodoList>
                  <Todo><TodoTitle $done>아침 조깅🏃</TodoTitle><Stamp>작성시점 2022/8/2 09:30 - 완료시점 2022/8/3 14:00</Stamp></Todo>
                  <Todo><TodoTitle>BHC 마법클 먹어보기</TodoTitle><Stamp>작성시점 2022/8/2 15:01</Stamp></Todo>
                </TodoList>
                <Note>처리 완료 된 일은 처리 완료 화면에서도 확인 하실 수 있어요.</Note>
                <AddTodo id="new-todo" l={34} r={16} b={10} />
              </Screen>
            </Artboard>
            <Artboard $x={1066} $y={1102}>
              <ArtboardName>처리한 일 - 리스트 없음</ArtboardName>
              <Screen>
                <PhoneStatusBar />
                <Back />
                <Message $top={250}>아직<br />처리된 일이 없어요<br />해야 할 일 화면에서<br /><Mark $tone={c.green}>처리 완료</Mark>하면<br />이 화면에서<br />확인할 수 있어요.</Message>
              </Screen>
            </Artboard>
            <Artboard $x={1521} $y={1102}>
              <ArtboardName>처리한 일</ArtboardName>
              <Screen>
                <PhoneStatusBar />
                <Back />
                <TodoList $top={1}>
                  <Todo><TodoTitle>고양이 밥 주기</TodoTitle><Stamp>작성시점 2022/8/1 13:00 - 완료시점 2022/8/1 14:00</Stamp></Todo>
                  <Todo><TodoTitle>낮잠 자기</TodoTitle><Stamp>작성시점 2022/8/1 13:01 - 완료시점 2022/8/1 17:00</Stamp></Todo>
                  <Todo $last><TodoTitle>TIL 작성하기</TodoTitle><Stamp>작성시점 2022/8/1 13:04 - 완료시점 2022/8/1 21:03</Stamp></Todo>
                </TodoList>
              </Screen>
            </Artboard>
            <FlowTag>Flow 1<Icon w={28}><path d="M14 25H2V2h22v10" /><path d="M14 13v13l11-6.500z" /></Icon></FlowTag>
            <Wires width="1600" height="1200" viewBox="0 0 1600 1200" fill="none" stroke={c.wire} strokeWidth="4" aria-hidden>
              <path d="M995 555C1023 555 998 644 1064 644M1050 631l14 13-14 13" />
              <path d="M995 699C1148 699 1272 918 1272 1132M1260 1113l12 19 12-19" />
              <circle cx="995" cy="555" r="10" fill="#fff" />
              <circle cx="995" cy="699" r="10" fill="#fff" />
            </Wires>
            <Shade />
            <Thumb />
            <Thumb $vertical />
          </Canvas>

          <ProtoPanel>
            <ProtoTabs>
              <PanelTab>Design</PanelTab>
              <PanelTab $on $ml={32}>Prototype</PanelTab>
            </ProtoTabs>
            <Section>
              <Row><Heading>Device</Heading></Row>
              <Row>
                <Picker aria-label="Device"><option>iPhone 14 Pro</option></Picker><Chevron tone="#858585" />
                <Orientation>
                  <Orient $on><HiddenInput type="radio" name="orientation" defaultChecked aria-label="Portrait" /><Glyph $w={16} $h={28} /></Orient>
                  <Orient><HiddenInput type="radio" name="orientation" aria-label="Landscape" /><Glyph $w={28} $h={16} /></Orient>
                </Orientation>
              </Row>
              <Row><Caption htmlFor="model">Model</Caption></Row>
              <Row $h={32}><Picker id="model"><option>Space Black</option></Picker><Chevron tone="#858585" /></Row>
              <Row $h={96}><Caption as="span">Preview</Caption></Row>
              <Preview>
                <svg width="108" height="222" viewBox="0 0 108 222" aria-hidden>
                  <rect x="2" y="1" width="104" height="220" rx="18" fill="#050505" stroke="#a5a5a5" strokeWidth="1.500" />
                  <rect x="6" y="5" width="96" height="212" rx="14" fill="#1e2029" />
                  <rect x="38" y="8" width="32" height="10" rx="5" fill="#000" />
                  <path d="M1 43v8M1 60v16M1 81v16M107 72v26" stroke="#999" />
                </svg>
              </Preview>
            </Section>
            <Section>
              <Row><Heading>Background</Heading></Row>
              <Row><Swatch />000000</Row>
            </Section>
            <Section>
              <Row><Heading>Prototyping</Heading></Row>
              <Row>Flow 1</Row>
            </Section>
            <Section $open>
              <Row><Heading>Removing a connection</Heading><CloseButton aria-label="Dismiss"><CloseIcon /></CloseButton></Row>
              <Tip>
                <Icon w={38} h={34}><path d="M2 2h14v9M16 21v10H2" /><circle cx="15" cy="16" r="4" /><path d="M23 10l12 12M35 10L23 22" /></Icon>
                <TipText>To delete a connection, click and drag on either end.</TipText>
              </Tip>
              <Row><Heading>Running your prototype</Heading><CloseButton aria-label="Dismiss"><CloseIcon /></CloseButton></Row>
              <Tip>
                <Icon w={32}><path d="M11 6v20l16-10z" /></Icon>
                <TipText>Use the play button in the toolbar to play your prototype. If there are no connections, the play button can be used to play a presentation of your frames.</TipText>
              </Tip>
            </Section>
            <HelpButton aria-label="Help">
              <Icon w={20} h={32} sw={2}><path d="M3 9q0-7 7-7t7 7q0 4-4 7-3 2-3 7" /><path d="M10 28v3" /></Icon>
            </HelpButton>
          </ProtoPanel>
        </Body>
      </Window>

      <Shelf>
        <LeftDesk>
          <FileLabel><Dim>63a615c05f19301</Dim><br />dca5c6a...cker.png</FileLabel>
          <svg width="124" height="112" viewBox="0 0 124 112" aria-hidden>
            <defs><linearGradient id="deep" x2="1"><stop stopColor="#0a2c7c" /><stop offset="1" stopColor="#04103c" /></linearGradient></defs>
            <path d="M66 0h58v112H86Q72 60 66 0z" fill="url(#deep)" />
            <path d="M6 0h16l18 112h-5Z" fill="#0d4fa8" />
            <path d="M6 0l30 112M22 0q6 60 22 112M66 0q6 60 20 112" fill="none" stroke="#6fb0ef" strokeWidth="3" />
          </svg>
        </LeftDesk>
        <DockBar>
          {dock.map((d, i) => <DockItem key={i} $run={d.run}>{d.art}</DockItem>)}
          <DockRule />
          <DockItem><Folder><path d="M6 6h50v4H6z" fill="#5fb4e6" /></Folder></DockItem>
          <DockItem><Folder><rect x="10" y="1" width="22" height="20" fill="#e8e8e8" /><rect x="34" y="1" width="24" height="20" fill="#f4f4f4" /></Folder></DockItem>
          <DockItem>
            <Art>
              <path d="M8 8q4-14 14-10 8-8 16 0 12-4 18 10z" fill="#d9d9d9" />
              <path d="M16 2l8 8M30-2l4 10M44 0l-6 9" stroke="#555" strokeWidth="3" />
              <path d="M5 8h54l-7 54q-1 5-20 5t-20-5z" fill="#717375" />
              <ellipse cx="32" cy="9" rx="27" ry="4" fill="none" stroke="#aaa" strokeWidth="2" />
              <path d="M20 16l3 46M44 16l-3 46" stroke="#8b8d8f" strokeWidth="4" />
            </Art>
          </DockItem>
        </DockBar>
        <RightDesk>
          <FileCard>
            <svg width="80" height="34" viewBox="0 0 80 34" stroke="#555" strokeWidth="1.500" strokeDasharray="5 1 3 1 7 1" aria-hidden>
              <path d="M2 3h36M2 6h70M2 12h18M2 15h56M2 18h44M2 21h50M2 27h6M2 30h40M2 33h36" />
            </svg>
            MD
          </FileCard>
          <FileEnd>itar</FileEnd>
          <FileDate>2023-07-26-</FileDate>
        </RightDesk>
      </Shelf>
    </Desktop>
  );
}
